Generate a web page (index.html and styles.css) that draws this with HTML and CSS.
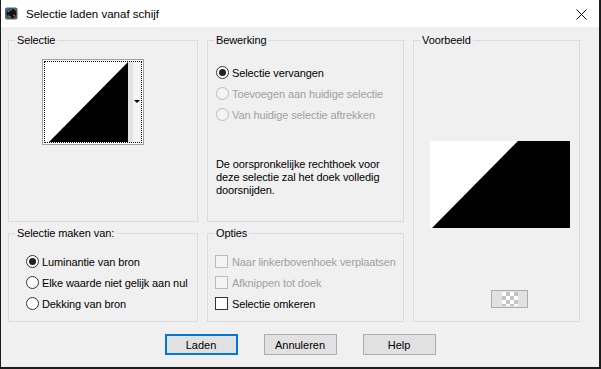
FILE: index.html
```html
<!DOCTYPE html>
<html lang="nl">
<head>
  <meta charset="UTF-8">
  <title>Selectie laden vanaf schijf</title>
  <link rel="stylesheet" href="styles.css">
</head>
<body>
  <div class="window">
    <div class="titlebar">
      <svg class="app-icon" width="13" height="13" viewBox="0 0 13 13">
        <rect x="0" y="0.5" width="12.5" height="12" rx="2" fill="#5b5e63"/>
        <circle cx="6.5" cy="6.5" r="4.8" fill="#111"/>
        <path d="M3 5 A4 4 0 0 1 7 2.6" stroke="#2f8fe0" stroke-width="1.4" fill="none"/>
        <path d="M3.2 8.5 A4 4 0 0 0 6 10.4" stroke="#3dbb5a" stroke-width="1.2" fill="none"/>
        <circle cx="9" cy="8.6" r="1" fill="#d9412f"/>
      </svg>
      <span class="title">Selectie laden vanaf schijf</span>
      <svg class="close" width="11" height="11" viewBox="0 0 11 11">
        <path d="M0.5 0.5 L10.5 10.5 M10.5 0.5 L0.5 10.5" stroke="#000" stroke-width="1"/>
      </svg>
    </div>

    <div class="dialog">
      <div class="groups">
        <fieldset class="group group-selectie">
          <legend>Selectie</legend>
          <div class="thumb">
            <div class="thumb-inner">
              <svg class="thumb-image" width="83" height="80" viewBox="0 0 83 80">
                <rect width="83" height="80" fill="#fff"/>
                <polygon points="4,80 83,0 83,80" fill="#000"/>
              </svg>
              <div class="thumb-strip"></div>
              <div class="thumb-drop"><span class="drop-arrow"></span></div>
            </div>
          </div>
        </fieldset>

        <fieldset class="group group-bewerking">
          <legend>Bewerking</legend>
          <div class="group-body">
            <div class="option"><span class="radio checked"></span>Selectie vervangen</div>
            <div class="option disabled"><span class="radio"></span>Toevoegen aan huidige selectie</div>
            <div class="option disabled"><span class="radio"></span>Van huidige selectie aftrekken</div>
            <p class="note">De oorspronkelijke rechthoek voor deze selectie zal het doek volledig doorsnijden.</p>
          </div>
        </fieldset>

        <fieldset class="group group-voorbeeld">
          <legend>Voorbeeld</legend>
          <svg class="preview" width="140" height="87" viewBox="0 0 140 87">
            <rect width="140" height="87" fill="#fff"/>
            <polygon points="88,0 140,0 140,87 2,87" fill="#000"/>
          </svg>
          <div class="checker-btn"><span class="checker"></span></div>
        </fieldset>

        <fieldset class="group group-bron">
          <legend>Selectie maken van:</legend>
          <div class="group-body">
            <div class="option"><span class="radio checked"></span>Luminantie van bron</div>
            <div class="option"><span class="radio"></span>Elke waarde niet gelijk aan nul</div>
            <div class="option"><span class="radio"></span>Dekking van bron</div>
          </div>
        </fieldset>

        <fieldset class="group group-opties">
          <legend>Opties</legend>
          <div class="group-body">
            <div class="option disabled"><span class="check"></span>Naar linkerbovenhoek verplaatsen</div>
            <div class="option disabled"><span class="check"></span>Afknippen tot doek</div>
            <div class="option"><span class="check"></span>Selectie omkeren</div>
          </div>
        </fieldset>
      </div>

      <div class="buttons">
        <button class="btn btn-default">Laden</button>
        <button class="btn">Annuleren</button>
        <button class="btn">Help</button>
      </div>
    </div>
  </div>
</body>
</html>
```

FILE: styles.css
```css
/* Base */
* {
  box-sizing: border-box;
  margin: 0;
  padding: 0;
}

:root {
  --face: #f0f0f0;
  --frame: #dcdcdc;
  --text: #000;
  --text-disabled: #a0a0a0;
  --control-border: #333;
  --control-disabled: #bcbcbc;
  --btn-face: #e1e1e1;
  --btn-border: #adadad;
  --accent: #0078d7;
  --font-ui: "Liberation Sans", Arial, sans-serif;
}

body {
  font-family: var(--font-ui);
  font-size: 11px;
  letter-spacing: -0.1px;
  color: var(--text);
  background: #fff;
}

/* Window */
.window {
  width: 601px;
  height: 369px;
  background: var(--face);
  border-left: 1px solid #1c1c1c;
  border-right: 2px solid #1c1c1c;
  border-bottom: 2px solid #1c1c1c;
  display: flex;
  flex-direction: column;
}

.titlebar {
  height: 27px;
  background: #fff;
  display: flex;
  align-items: center;
  padding-left: 4px;
  padding-right: 12px;
}

.app-icon {
  margin-right: 8px;
}

.title {
  font-size: 11.5px;
  letter-spacing: 0;
  flex: 1;
}

.close {
  margin-top: 1px;
}

/* Groups */
.dialog {
  flex: 1;
  padding: 7px 0 0 7px;
}

.groups {
  display: grid;
  grid-template-columns: 190px 197px 167px;
  grid-template-rows: 188px 95px;
  column-gap: 9px;
  row-gap: 5px;
}

.group {
  border: 1px solid var(--frame);
  min-width: 0;
}

.group legend {
  margin-left: 6px;
  padding: 0 2px;
  line-height: 13px;
}

.group-voorbeeld {
  grid-column: 3;
  grid-row: 1 / span 2;
}

.group-bewerking .group-body {
  padding: 15px 0 0 8px;
}

.group-bron .group-body {
  padding: 11px 0 0 17px;
}

.group-opties .group-body {
  padding: 11px 0 0 7px;
}

/* Thumbnail in "Selectie" */
.thumb {
  margin: 12px 0 0 33px;
  width: 102px;
  height: 86px;
  border: 1px solid #a0a0a0;
  background: #fff;
  padding: 1px;
}

.thumb-inner {
  height: 100%;
  border: 1px dotted #000;
  display: flex;
}

.thumb-image {
  display: block;
}

.thumb-strip {
  width: 5px;
  background: #e3e3e3;
}

.thumb-drop {
  flex: 1;
  background: #f4f4f4;
  display: flex;
  align-items: center;
  justify-content: center;
}

.drop-arrow {
  width: 0;
  height: 0;
  border-left: 3px solid transparent;
  border-right: 3px solid transparent;
  border-top: 3px solid #000;
  margin-top: -1px;
}

/* Radio buttons and checkboxes */
.option {
  display: flex;
  align-items: center;
  height: 21px;
  white-space: nowrap;
}

.option.disabled {
  color: var(--text-disabled);
}

.radio {
  width: 13px;
  height: 13px;
  border: 1px solid var(--control-border);
  border-radius: 50%;
  background: #fff;
  margin-right: 3px;
  display: flex;
  align-items: center;
  justify-content: center;
}

.radio.checked::after {
  content: "";
  width: 7px;
  height: 7px;
  border-radius: 50%;
  background: #222;
}

.check {
  width: 13px;
  height: 13px;
  border: 1px solid var(--control-border);
  background: #fff;
  margin-right: 4px;
}

.option.disabled .radio,
.option.disabled .check {
  border-color: var(--control-disabled);
  background: #f4f4f4;
}

.note {
  margin-top: 33px;
  line-height: 13px;
  padding-right: 14px;
}

/* Preview */
.preview {
  display: block;
  margin: 94px 0 0 16px;
}

.checker-btn {
  margin: 62px 0 0 77px;
  width: 37px;
  height: 18px;
  background: var(--btn-face);
  border: 1px solid var(--btn-border);
  display: flex;
  align-items: center;
  justify-content: center;
}

.checker {
  width: 16px;
  height: 14px;
  background-color: #fff;
  background-image:
    linear-gradient(45deg, #c4c4c4 25%, transparent 25%, transparent 75%, #c4c4c4 75%),
    linear-gradient(45deg, #c4c4c4 25%, transparent 25%, transparent 75%, #c4c4c4 75%);
  background-size: 8px 8px;
  background-position: 0 0, 4px 4px;
}

/* Buttons */
.buttons {
  display: flex;
  justify-content: center;
  gap: 26px;
  margin-top: 12px;
  padding-right: 7px;
}

.btn {
  width: 73px;
  height: 21px;
  font-family: var(--font-ui);
  font-size: 11px;
  color: var(--text);
  background: var(--btn-face);
  border: 1px solid var(--btn-border);
}

.btn-default {
  border: 2px solid var(--accent);
}
```
